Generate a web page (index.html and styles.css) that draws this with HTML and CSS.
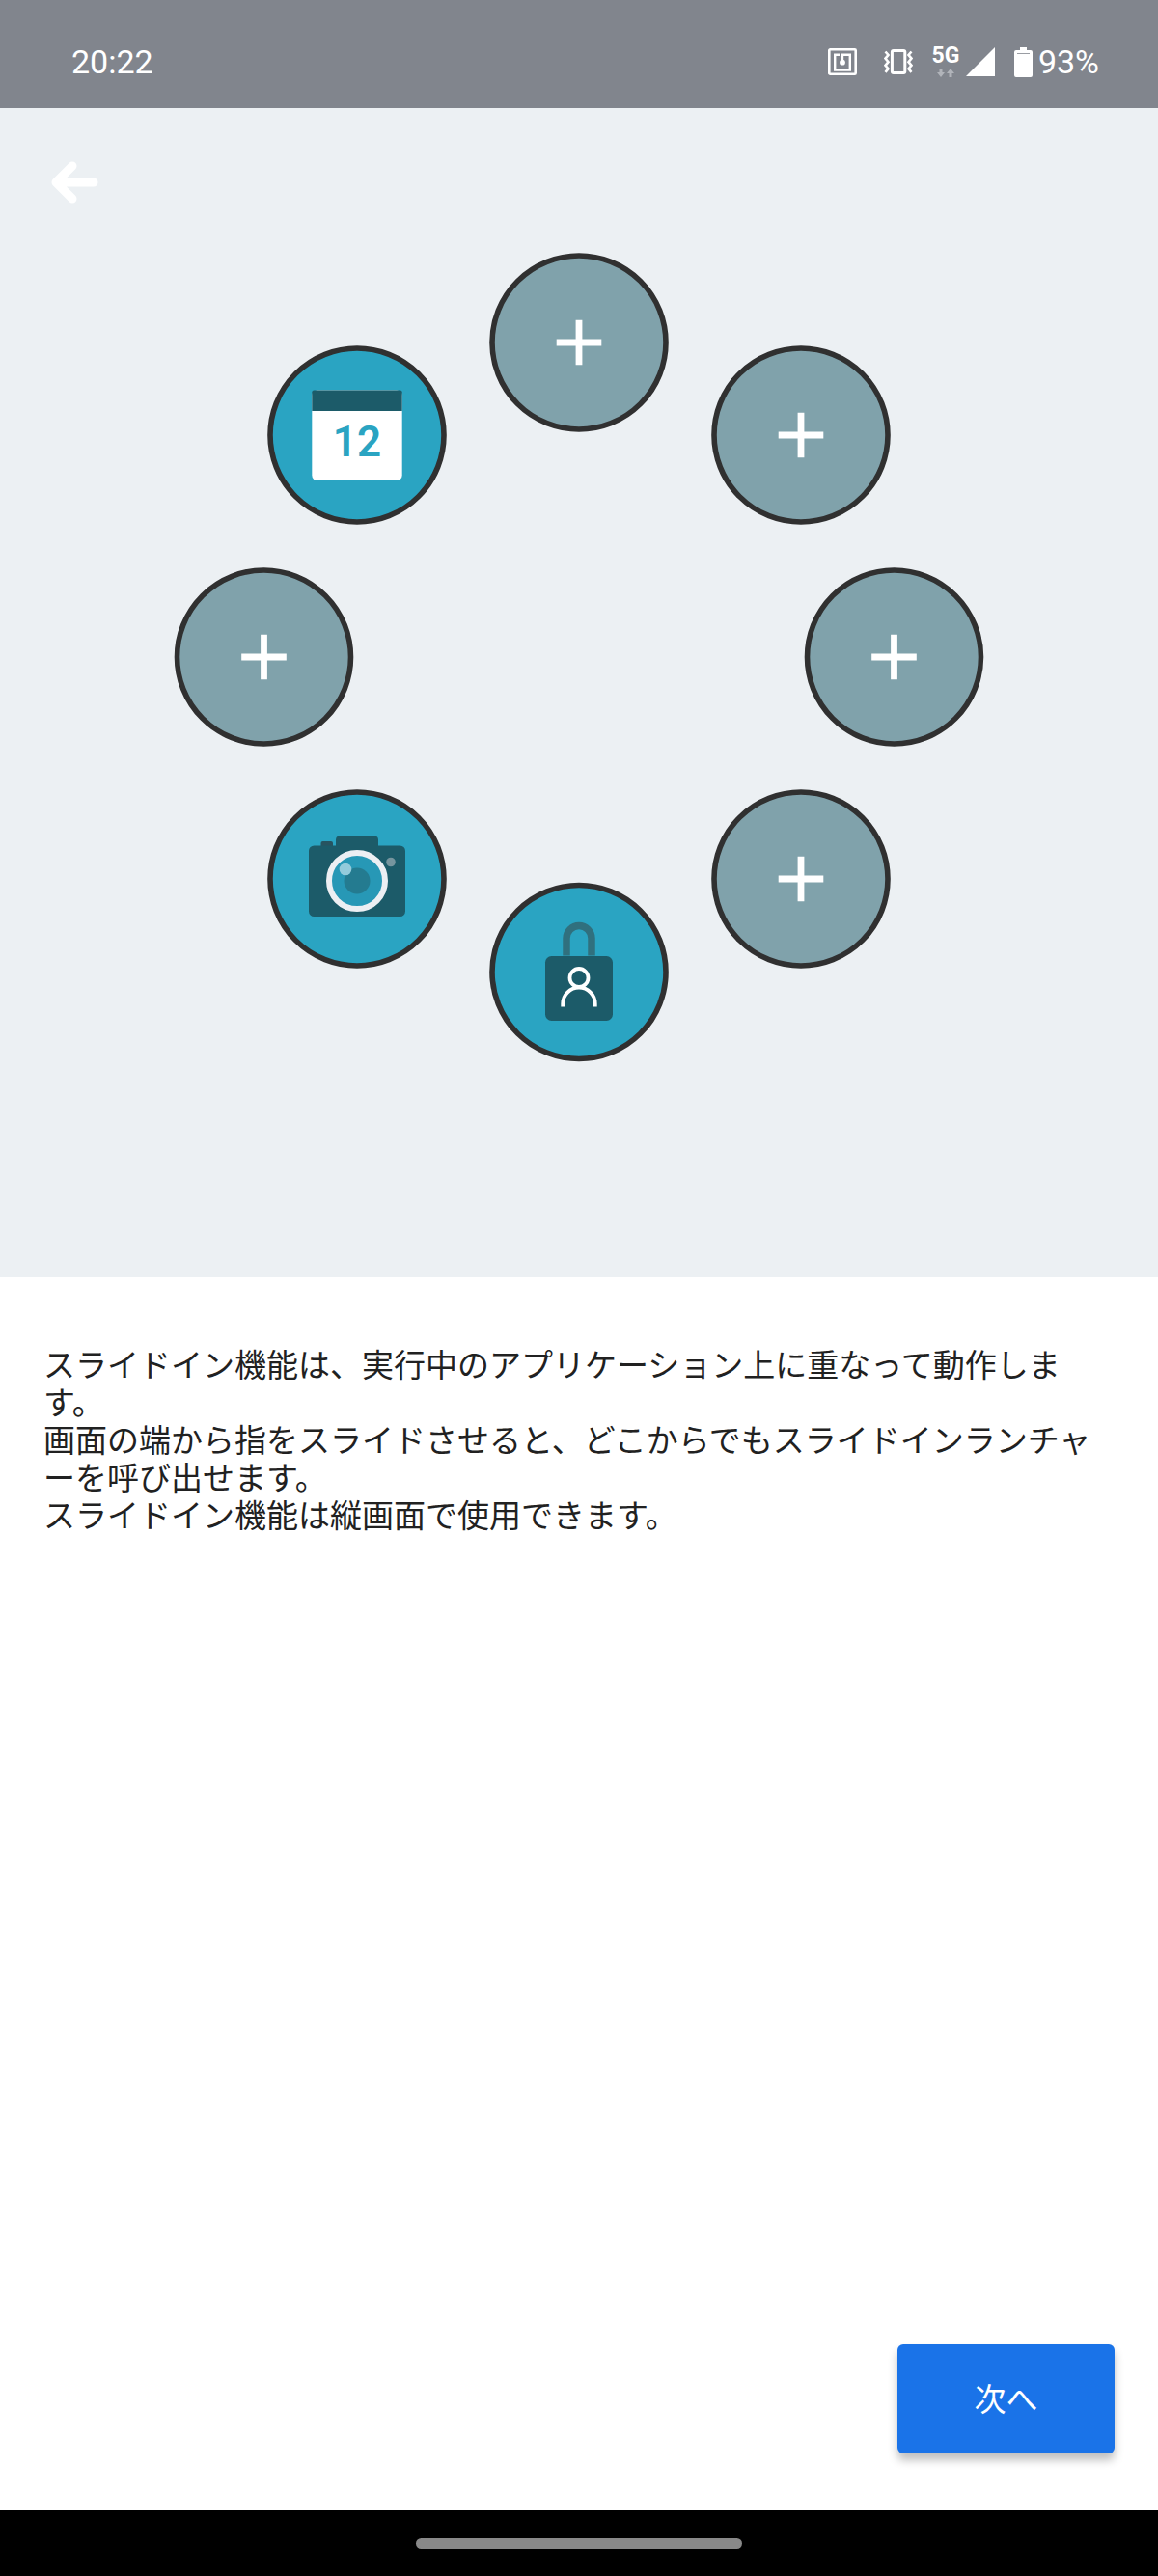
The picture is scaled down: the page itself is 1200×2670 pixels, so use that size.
FILE: index.html
```html
<!DOCTYPE html>
<html lang="ja">
<head>
    <meta charset="UTF-8">
    <title>スライドイン</title>
    <link rel="stylesheet" href="styles.css">
</head>
<body>
    <header class="status-bar">
        <span class="clock">20:22</span>
        <div class="status-icons">
            <svg class="nfc" width="30" height="28" viewBox="0 0 30 28" fill="none" stroke="#fff">
                <rect x="1.3" y="1.3" width="27.4" height="25.4" rx="1" stroke-width="2.6"/>
                <path d="M12 6.7H7.2v15.8h15.6V6.7H15v7" stroke-width="2.4"/>
                <circle cx="15" cy="14.7" r="2.9" fill="#fff" stroke="none"/>
            </svg>
            <svg class="vibrate" width="30" height="28" viewBox="0 0 30 28" fill="none" stroke="#fff">
                <rect x="8.4" y="2.6" width="13.4" height="23" rx="1.5" stroke-width="3"/>
                <path d="M1.5 3.5l3 3.5-3 3.6 3 3.6-3 3.6 3 3.4-3 3.6M28.5 3.5l-3 3.5 3 3.6-3 3.6 3 3.6-3 3.4 3 3.6" stroke-width="2.6"/>
            </svg>
            <div class="network">
                <span>5G</span>
                <svg width="18" height="9" viewBox="0 0 18 9" fill="#b1b4ba">
                    <path d="M2.5 0h3v4H8L4 9 0 4h2.500zM12.500 9h3V5H18l-4-5-4 5h2.500z"/>
                </svg>
            </div>
            <svg class="signal" width="30" height="30" viewBox="0 0 30 30" fill="#fff">
                <path d="M30 0v30H0z"/>
            </svg>
            <svg class="battery" width="19" height="31" viewBox="0 0 19 31">
                <path d="M6 0h7v3h4a2 2 0 0 1 2 2v24a2 2 0 0 1-2 2H2a2 2 0 0 1-2-2V5a2 2 0 0 1 2-2h4z" fill="#fff"/>
                <path d="M3 6.500h13" stroke="#9a9da3" stroke-width="1"/>
            </svg>
            <span class="percent">93%</span>
        </div>
    </header>

    <section class="hero">
        <svg class="back" width="50" height="44" viewBox="0 0 50 44" fill="none" stroke="#fff" stroke-width="9" stroke-linecap="round" stroke-linejoin="round">
            <path d="M22 5L5 22l17 17M7 22h37"/>
        </svg>
        <svg class="wheel" width="840" height="840" viewBox="0 0 840 840">
            <defs>
                <g id="empty">
                    <circle r="90" fill="#80a2ab" stroke="#303030" stroke-width="5.6"/>
                    <path d="M-23.3 0h46.6M0-23.3v46.6" stroke="#fff" stroke-width="6.8"/>
                </g>
                <circle id="slot" r="90" fill="#2aa4c2" stroke="#303030" stroke-width="5.6"/>
            </defs>

            <use href="#empty" x="420" y="94"/>
            <use href="#empty" x="650" y="190"/>
            <use href="#empty" x="746.5" y="420"/>
            <use href="#empty" x="650" y="650"/>
            <use href="#empty" x="93.5" y="420"/>

            <!-- lock -->
            <g transform="translate(420 746.5)">
                <use href="#slot"/>
                <path d="M-13-17v-18a13 13 0 0 1 26 0v18" fill="none" stroke="#30707e" stroke-width="7.5"/>
                <rect x="-35" y="-16.5" width="70" height="67" rx="6.5" fill="#1c5b69"/>
                <g fill="none" stroke="#fff" stroke-width="3.8">
                    <circle cy="6" r="9.5"/>
                    <path d="M-16.8 36v-3a16.8 16.8 0 0 1 33.6 0v3"/>
                </g>
            </g>

            <!-- camera -->
            <g transform="translate(190 650)">
                <use href="#slot"/>
                <rect x="-37.5" y="-39" width="12.5" height="9" rx="2" fill="#275460"/>
                <path d="M-22-34.500v-6a4 4 0 0 1 4-4h36a4 4 0 0 1 4 4v6h22.500a5.500 5.500 0 0 1 5.500 5.500v62.500a5.500 5.500 0 0 1-5.500 5.500h-89a5.500 5.500 0 0 1-5.500-5.500v-62.500a5.500 5.500 0 0 1 5.500-5.500z" fill="#1c5b69"/>
                <circle cy="2" r="29" fill="#2798b6" stroke="#eceff3" stroke-width="6"/>
                <circle cy="2" r="13.5" fill="#247b90"/>
                <circle cx="-12" cy="-10" r="6.300" fill="#93cbdb"/>
                <circle cx="35" cy="-17.5" r="4.8" fill="#76959e"/>
            </g>

            <!-- calendar -->
            <g transform="translate(190 190)">
                <use href="#slot"/>
                <rect x="-46.7" y="-46.5" width="93.4" height="93.5" rx="5.5" fill="#fff"/>
                <path d="M-46.7-25v-19.500a2 2 0 0 1 2-2h89.400a2 2 0 0 1 2 2V-25z" fill="#1c5b69"/>
                <text class="day" x="0" y="22">12</text>
            </g>
        </svg>
    </section>

    <main class="content">
        <p>
            スライドイン機能は、実行中のアプリケーション上に重なって動作しま<br>す。<br>
            画面の端から指をスライドさせると、どこからでもスライドインランチャ<br>ーを呼び出せます。<br>
            スライドイン機能は縦画面で使用できます。
        </p>
        <button class="next">次へ</button>
    </main>

    <footer class="nav-bar">
        <div class="handle"></div>
    </footer>
</body>
</html>
```
FILE: styles.css
```css
* {
    box-sizing: border-box;
}

body {
    margin: 0;
    width: 1200px;
    height: 2670px;
    display: flex;
    flex-direction: column;
    background-color: #fff;
    font-family: Roboto, "Noto Sans CJK JP", sans-serif;
}

.status-bar {
    height: 112px;
    padding: 16px 61px 0 74px;
    display: flex;
    justify-content: space-between;
    align-items: center;
    background-color: #81858d;
    color: #fff;
    font-size: 34px;
}

.status-icons {
    display: flex;
    align-items: center;
}

.nfc {
    margin-right: 28px;
}

.vibrate {
    margin-right: 20px;
}

.network {
    width: 28px;
    margin-right: 7px;
    display: flex;
    flex-direction: column;
    align-items: center;
    gap: 5px;
    padding-top: 1px;
    font-size: 23px;
    font-weight: bold;
    line-height: 17px;
}

.signal {
    margin-right: 20px;
}

.battery {
    margin-right: 6px;
}

.hero {
    position: relative;
    height: 1212px;
    padding-top: 149px;
    background-color: #ecf0f3;
    text-align: center;
}

.back {
    position: absolute;
    left: 53px;
    top: 55px;
}

.day {
    fill: #2aa4c2;
    font-size: 44px;
    font-weight: 600;
    text-anchor: middle;
}

.content {
    flex: 1;
    padding: 70px 45px 59px;
    display: flex;
    flex-direction: column;
    justify-content: space-between;
}

.content p {
    margin: 0;
    color: #212121;
    font-family: "Noto Sans CJK JP", sans-serif;
    font-size: 33px;
    line-height: 39px;
    white-space: nowrap;
}

.next {
    align-self: flex-end;
    width: 225px;
    height: 113px;
    padding: 0 0 3px;
    border: none;
    border-radius: 6px;
    background-color: #1a73e8;
    box-shadow: 0 7px 10px rgba(0, 0, 0, 0.25);
    color: #fff;
    font-family: "Noto Sans CJK JP", sans-serif;
    font-size: 33px;
}

.nav-bar {
    height: 68px;
    display: flex;
    justify-content: center;
    align-items: center;
    background-color: #000;
}

.handle {
    width: 338px;
    height: 11px;
    border-radius: 6px;
    background-color: #888;
}
```
